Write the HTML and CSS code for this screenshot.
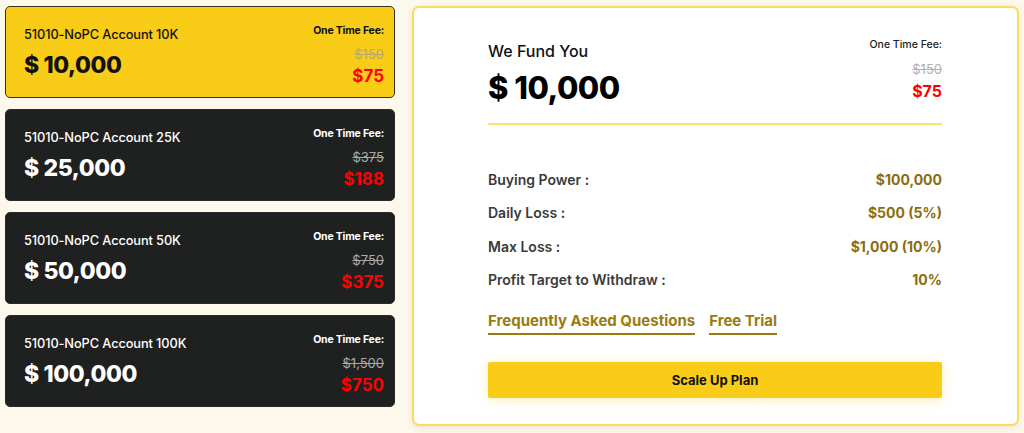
FILE: index.html
```html
<!DOCTYPE html>
<html>
<head>
<meta charset="utf-8">
<link rel="stylesheet" href="styles.css">
</head>
<body>
<div class="wrap">
  <div class="plans">
    <div class="plan active">
      <div class="plan-left">
        <div class="plan-name">51010-NoPC Account 10K</div>
        <div class="plan-amount">$ 10,000</div>
      </div>
      <div class="plan-right">
        <div class="fee-label">One Time Fee:</div>
        <div class="fee-old">$150</div>
        <div class="fee-new">$75</div>
      </div>
    </div>
    <div class="plan">
      <div class="plan-left">
        <div class="plan-name">51010-NoPC Account 25K</div>
        <div class="plan-amount">$ 25,000</div>
      </div>
      <div class="plan-right">
        <div class="fee-label">One Time Fee:</div>
        <div class="fee-old">$375</div>
        <div class="fee-new">$188</div>
      </div>
    </div>
    <div class="plan">
      <div class="plan-left">
        <div class="plan-name">51010-NoPC Account 50K</div>
        <div class="plan-amount">$ 50,000</div>
      </div>
      <div class="plan-right">
        <div class="fee-label">One Time Fee:</div>
        <div class="fee-old">$750</div>
        <div class="fee-new">$375</div>
      </div>
    </div>
    <div class="plan">
      <div class="plan-left">
        <div class="plan-name">51010-NoPC Account 100K</div>
        <div class="plan-amount">$ 100,000</div>
      </div>
      <div class="plan-right">
        <div class="fee-label">One Time Fee:</div>
        <div class="fee-old">$1,500</div>
        <div class="fee-new">$750</div>
      </div>
    </div>
  </div>
  <div class="detail">
    <div class="detail-head">
      <div class="head-left">
        <div class="head-title">We Fund You</div>
        <div class="head-amount">$ 10,000</div>
      </div>
      <div class="head-right">
        <div class="head-fee-label">One Time Fee:</div>
        <div class="head-fee-old">$150</div>
        <div class="head-fee-new">$75</div>
      </div>
    </div>
    <div class="rows">
      <div class="row"><span class="row-label">Buying Power :</span><span class="row-value">$100,000</span></div>
      <div class="row"><span class="row-label">Daily Loss :</span><span class="row-value">$500 (5%)</span></div>
      <div class="row"><span class="row-label">Max Loss :</span><span class="row-value">$1,000 (10%)</span></div>
      <div class="row"><span class="row-label">Profit Target to Withdraw :</span><span class="row-value">10%</span></div>
    </div>
    <div class="links">
      <a class="link">Frequently Asked Questions</a>
      <a class="link">Free Trial</a>
    </div>
    <button class="cta">Scale Up Plan</button>
  </div>
</div>
</body>
</html>
```
FILE: styles.css
```css
* { box-sizing: border-box; }
html, body { margin: 0; padding: 0; }
body {
  background: #fdf8ec;
  font-family: "Inter", "Open Sans", sans-serif;
  width: 1024px;
  height: 433px;
  overflow: hidden;
}
.wrap {
  display: flex;
  align-items: flex-start;
  gap: 17px;
  padding: 6px 5px 0 5px;
}
.plans {
  width: 390px;
  display: flex;
  flex-direction: column;
  gap: 11px;
}
.plan {
  height: 92px;
  background: #1f2020;
  border: 1px solid #2a2a2a;
  border-radius: 5px;
  display: flex;
  justify-content: space-between;
  padding: 20px 10px 0 18px;
  color: #fff;
}
.plan.active {
  background: #f9cc17;
  border-color: #3b3317;
  color: #111;
}
.plan-name {
  font-size: 12.8px;
  font-weight: 500;
  line-height: 16px;
  letter-spacing: -0.1px;
}
.plan-amount {
  font-size: 23px;
  font-weight: 800;
  line-height: 28px;
  margin-top: 8px;
  letter-spacing: -0.4px;
}
.plan-right {
  display: flex;
  flex-direction: column;
  align-items: flex-end;
}
.fee-label {
  font-size: 10.5px;
  font-weight: 700;
  line-height: 14px;
  margin-top: -3px;
  letter-spacing: -0.2px;
}
.fee-old {
  font-size: 13px;
  color: #a9a9a9;
  text-decoration: line-through;
  line-height: 16px;
  margin-top: 8px;
}
.plan.active .fee-old { color: #b9a869; }
.fee-new {
  font-size: 17px;
  font-weight: 700;
  color: #ff0000;
  line-height: 20px;
  margin-top: 4px;
}
.detail {
  width: 607px;
  height: 420px;
  background: #fff;
  border: 2px solid #fcdc5c;
  border-radius: 7px;
  padding: 30px 75px 0 74px;
  display: flex;
  flex-direction: column;
  box-shadow: 0 2px 6px rgba(120, 110, 80, 0.12);
}
.detail-head {
  display: flex;
  justify-content: space-between;
  border-bottom: 2px solid #fde26a;
  padding-bottom: 16px;
}
.head-title {
  font-size: 16px;
  font-weight: 500;
  line-height: 22px;
  margin-top: 2px;
  color: #111;
}
.head-amount {
  font-size: 31px;
  font-weight: 800;
  line-height: 38px;
  margin-top: 7px;
  color: #000;
  letter-spacing: -0.5px;
}
.head-right {
  text-align: right;
}
.head-fee-label {
  font-size: 10.5px;
  font-weight: 500;
  color: #222;
  line-height: 14px;
}
.head-fee-old {
  font-size: 13px;
  color: #b0b0b0;
  text-decoration: line-through;
  line-height: 16px;
  margin-top: 9px;
}
.head-fee-new {
  font-size: 16px;
  font-weight: 700;
  color: #ff0000;
  line-height: 20px;
  margin-top: 4px;
}
.rows {
  margin-top: 44px;
  display: flex;
  flex-direction: column;
  gap: 13.5px;
}
.row {
  display: flex;
  justify-content: space-between;
  align-items: center;
  height: 20px;
}
.row-label {
  font-size: 14px;
  font-weight: 600;
  color: #3a3a3a;
}
.row-value {
  font-size: 14px;
  font-weight: 700;
  color: #8a6d0d;
}
.links {
  display: flex;
  gap: 14px;
  margin-top: 22px;
}
.link {
  font-size: 15px;
  font-weight: 700;
  color: #9a7b10;
  border-bottom: 2px solid #9a7b10;
  padding-bottom: 3px;
  line-height: 18px;
}
.cta {
  margin-top: 27px;
  height: 36px;
  width: 100%;
  border: none;
  border-radius: 2px;
  background: #f9cc17;
  font-family: inherit;
  font-size: 13px;
  font-weight: 700;
  color: #111;
  box-shadow: 0 2px 12px rgba(249, 204, 23, 0.3);
}
```
